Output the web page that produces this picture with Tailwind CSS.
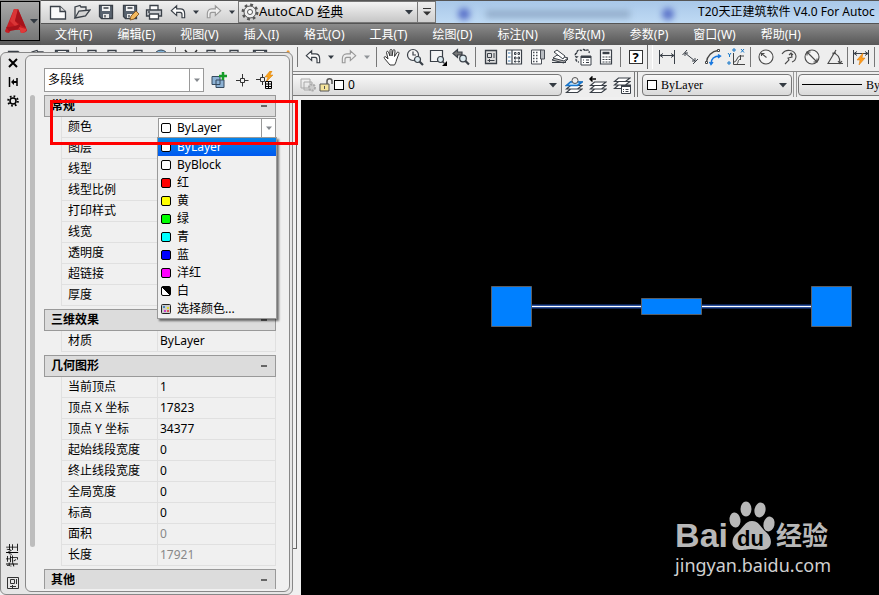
<!DOCTYPE html>
<html lang="zh-CN">
<head>
    <meta charset="UTF-8">
    <meta name="viewport" content="width=device-width, initial-scale=1.0">
    <title>T20天正建筑软件 V4.0 For AutoCAD</title>
    <script src="https://cdn.jsdelivr.net/npm/@tailwindcss/browser@4"></script>
</head>
<body class="relative flex h-screen flex-col overflow-hidden bg-[#f0f0f0] font-['Noto_Sans','Noto_Sans_CJK_SC',sans-serif] text-xs text-black">

    <!-- Shared icons -->
    <svg class="hidden">
        <symbol id="i-new" viewBox="0 0 18 18" stroke="#3a4048" stroke-width="1.3"><path d="M1.500 3.500H11l5.500 5v7.500h-15z" fill="#fafafa"/><path d="M11 3.500v5h5.500" fill="#ddd"/></symbol>
        <symbol id="i-open" viewBox="0 0 18 18" stroke="#3a4048" stroke-width="1.3"><path d="M2 15V4l5-1.500 1 1.500h5v3" fill="#e4e4e4"/><path d="M2 15 6 8l11-1-4.500 6z" fill="#d4d4d4"/></symbol>
        <symbol id="i-save" viewBox="0 0 18 18" stroke="#3a4048" stroke-width="1.3"><path d="M2.500 2.500h13v13h-11l-2-2z" fill="#59636f"/><path d="M5 3h8v5H5z" fill="#f3f3f3" stroke="none"/><path d="M6 11h6v4H6z" fill="#e8e8e8" stroke="none"/><path d="M6.500 5h5M8 12v2.500"/></symbol>
        <symbol id="i-print" viewBox="0 0 18 18" stroke="#3a4048" stroke-width="1.3"><path d="M5 7V2.500h8V7" fill="#fff"/><path d="M1.500 7h15v6h-15z" fill="#c9ccd0"/><path d="M4.500 11h9v5h-9z" fill="#fff"/><path d="M3 9h2"/></symbol>
        <symbol id="i-undo" viewBox="0 0 18 18" stroke="#3a4048" stroke-width="1.3"><path d="M1.500 7.500 7.500 2v3.500h4c3.500 0 5 2.500 5 5.500v4.500h-3V12c0-1.500-.5-2.500-2-2.500h-4V13z" fill="#fbfbfb"/></symbol>
        <symbol id="i-redo" viewBox="0 0 18 18" stroke="#999" stroke-width="1.3"><path d="M16.500 7.500 10.500 2v3.500h-4C3 5.500 1.500 8 1.500 11v4.500h3V12c0-1.500.5-2.500 2-2.500h4V13z" fill="#efefef"/></symbol>
        <symbol id="i-copy" viewBox="0 0 18 18" stroke="#3a4048" stroke-width="1.3"><path d="M2 2.500h8v10H2zM6 6h9v10H6z" fill="#f8f8f8"/></symbol>
        <symbol id="i-layers" viewBox="0 0 18 18" stroke="#3a4048" stroke-width="1.2"><path d="m1.500 16.500 4-3.500h11.500L12.500 16.500zM1.500 13l4-3.500H17L12.500 13zM1.500 9.500l4-3.500H17L12.500 9.500z" fill="#fff"/></symbol>
        <symbol id="i-down" viewBox="0 0 8 8"><path d="M0 2h8L4 6.500z" fill="#333a42"/></symbol>
    </svg>

    <header class="flex shrink-0 bg-linear-to-b from-[#8a8a8a] from-50% to-[#555]">
        <button aria-label="应用程序菜单" class="mt-px mr-px flex h-10 w-10 items-center justify-center gap-0.5 border border-black bg-linear-to-b from-[#a8a8a8] to-[#777] pl-0.5">
            <svg class="h-7 w-6 shrink-0" viewBox="0 0 24 28"><path d="M10 2h4l9 21c0 2-3 3-6 3l-1-3H7l-2 3c-2 0-4-1-4-2z" fill="#c61c22"/><path d="M10 2 6 14l9 9 1-3-5-6 3-12z" fill="#d93536"/><path d="m14 2-3 12 7 5 4 2z" fill="#a5131b"/><path d="M2 20c6 0 10-1 14-3v4c-4 2-8 3-11 3z" fill="#a5131b"/><path d="m15 20 7 2c1 2-2 4-5 4z" fill="#e03a3a"/></svg>
            <svg class="size-2 shrink-0"><use href="#i-down"/></svg>
        </button>
        <div class="min-w-0 flex-1">
            <div class="flex h-6 border-t border-b border-[#555] bg-[#bcd5f0]">
                <div class="flex items-center bg-linear-to-b from-[#f0f0f0] to-[#cfcfcf] pl-[5px]">
                    <button aria-label="新建" class="flex w-6 justify-center"><svg class="size-4.5"><use href="#i-new"/></svg></button>
                    <button aria-label="打开" class="flex w-6 justify-center"><svg class="size-4.5"><use href="#i-open"/></svg></button>
                    <button aria-label="保存" class="flex w-6 justify-center"><svg class="size-4.5"><use href="#i-save"/></svg></button>
                    <button aria-label="另存为" class="flex w-6 justify-center"><svg class="size-4.5" viewBox="0 0 18 18"><use href="#i-save"/><path d="m9 17 1-4 5-5 3 3-5 5z" fill="#f3b95f" stroke="#7a4a14" stroke-width=".8"/></svg></button>
                    <button aria-label="打印" class="flex w-6 justify-center"><svg class="size-4.5"><use href="#i-print"/></svg></button>
                    <button aria-label="放弃" class="flex w-6 justify-center"><svg class="size-4"><use href="#i-undo"/></svg></button>
                    <button aria-label="放弃列表" class="flex w-3 justify-center"><svg class="h-1.5 w-1.5"><use href="#i-down"/></svg></button>
                    <button aria-label="重做" class="flex w-6 justify-center"><svg class="size-4"><use href="#i-redo"/></svg></button>
                    <button aria-label="重做列表" class="flex w-3 justify-center"><svg class="h-1.5 w-1.5"><use href="#i-down"/></svg></button>
                    <label class="flex h-full w-[180px] items-center border border-[#777] bg-linear-to-b from-[#f4f4f4] to-[#c6c6c6] pr-1 pl-0.5">
                        <svg class="size-4.5 shrink-0" viewBox="0 0 18 18" fill="none" stroke="#555"><circle cx="9" cy="9" r="7.200" stroke-width="2.500" stroke-dasharray="2.800 2.850"/><circle cx="9" cy="9" r="6" fill="#eee"/><circle cx="9" cy="9" r="2.500" fill="#fff"/></svg>
                        <select aria-label="工作空间" class="min-w-0 flex-1 appearance-none text-[13px] outline-none"><option>AutoCAD 经典</option></select>
                        <svg class="size-2"><use href="#i-down"/></svg>
                    </label>
                    <button aria-label="自定义快速访问工具栏" class="flex h-full w-[18px] items-center justify-center border-y border-r border-[#777]">
                        <svg class="h-2.5 w-2" viewBox="0 0 8 10"><path d="M0 1.500h8" stroke="#333"/><path d="M0 4.500h8L4 8.500z" fill="#333"/></svg>
                    </button>
                </div>
                <div class="flex min-w-0 flex-1 items-center overflow-hidden bg-linear-to-b from-[#a9c8e9] to-[#bfdaf4] pl-[22px]">
                    <div aria-hidden="true" class="flex w-60 shrink-0 items-center gap-4 blur-[3px]">
                        <span class="mt-1 size-3 rounded-full bg-[#5870c8]"></span>
                        <span class="mt-1 h-2 w-36 bg-[#94aecb]"></span>
                        <span class="mt-1 ml-4 size-3 rounded-full bg-[#5870c8]"></span>
                    </div>
                    <h1 class="shrink-0 whitespace-nowrap">T20天正建筑软件 V4.0 For Autoc</h1>
                </div>
            </div>
            <nav class="flex h-[21px] items-center gap-[25px] overflow-hidden bg-linear-to-b from-[#8c8c8c] to-[#575757] pl-[14px] whitespace-nowrap text-white">
                <a href="#">文件(F)</a>
                <a href="#">编辑(E)</a>
                <a href="#">视图(V)</a>
                <a href="#">插入(I)</a>
                <a href="#">格式(O)</a>
                <a href="#">工具(T)</a>
                <a href="#">绘图(D)</a>
                <a href="#">标注(N)</a>
                <a href="#">修改(M)</a>
                <a href="#">参数(P)</a>
                <a href="#">窗口(W)</a>
                <a href="#">帮助(H)</a>
            </nav>
        </div>
    </header>

    <!-- Standard and dimension toolbars -->
    <div class="flex h-[27px] shrink-0 overflow-hidden border-b border-[#888] bg-[#eee] pb-0.5">
        <div class="flex shrink-0 items-center border-r border-[#666] pl-1">
            <button aria-label="新建" class="flex w-[23px] justify-center"><svg class="size-4.5"><use href="#i-new"/></svg></button>
            <button aria-label="打开" class="flex w-[23px] justify-center"><svg class="size-4.5"><use href="#i-open"/></svg></button>
            <button aria-label="保存" class="flex w-[23px] justify-center"><svg class="size-4.5"><use href="#i-save"/></svg></button>
            <i class="mx-[3px] h-5 w-px bg-[#777]"></i>
            <button aria-label="打印" class="flex w-[23px] justify-center"><svg class="size-4.5"><use href="#i-print"/></svg></button>
            <button aria-label="预览" class="flex w-[23px] justify-center"><svg class="size-4.5"><use href="#i-copy"/></svg></button>
            <button aria-label="发布" class="flex w-[23px] justify-center"><svg class="size-4.5"><use href="#i-print"/></svg></button>
            <button aria-label="三维DWF" class="flex w-[23px] justify-center"><svg class="size-4.5" viewBox="0 0 18 18"><circle cx="9" cy="9" r="7" fill="#7fb2d8" stroke="#345"/></svg></button>
            <i class="mx-[3px] h-5 w-px bg-[#777]"></i>
            <button aria-label="剪切" class="flex w-[23px] justify-center"><svg class="size-4.5" viewBox="0 0 18 18"><path d="m3 2 10 13M15 2 5 15" stroke="#333" stroke-width="1.500"/></svg></button>
            <button aria-label="复制" class="flex w-[23px] justify-center"><svg class="size-4.5"><use href="#i-copy"/></svg></button>
            <button aria-label="粘贴" class="flex w-[23px] justify-center"><svg class="size-4.5"><use href="#i-copy"/></svg></button>
            <button aria-label="特性匹配" class="flex w-[23px] justify-center"><svg class="size-4.5"><use href="#i-save"/></svg></button>
            <button aria-label="块编辑器" class="flex w-[23px] justify-center"><svg class="size-4.5" viewBox="0 0 18 18"><path d="M3 15 14 2l2 2L6 16z" fill="#f29a2e"/></svg></button>
            <i class="mx-[3px] h-5 w-px bg-[#777]"></i>
            <button aria-label="放弃" class="flex w-[23px] justify-center"><svg class="size-4"><use href="#i-undo"/></svg></button>
            <button aria-label="放弃列表" class="flex w-[13px] justify-center"><svg class="h-1.5 w-1.5"><use href="#i-down"/></svg></button>
            <button aria-label="重做" class="flex w-[23px] justify-center"><svg class="size-4"><use href="#i-redo"/></svg></button>
            <button aria-label="重做列表" class="flex w-[13px] justify-center opacity-50"><svg class="h-1.5 w-1.5"><use href="#i-down"/></svg></button>
            <i class="mx-[3px] h-5 w-px bg-[#777]"></i>
            <button aria-label="实时平移" class="flex w-[23px] justify-center"><svg class="size-4.5" viewBox="0 0 18 18"><path d="M7 17 1.500 10.500c-1-1.500.5-2.500 1.500-1.500L5 11 3.500 4.500c0-1.500 1.500-1.500 2-.5L7 8V2.500C7 1 9 1 9 2.500V8l1-5.500c.5-1.500 2-1 2 .5L11.500 8.500 14 4.500c1-1 2.500 0 2 1L13.500 12c-.5 2.500-1.500 4-2 5z" fill="#fff" stroke="#333"/></svg></button>
            <button aria-label="实时缩放" class="flex w-[23px] justify-center"><svg class="size-4.5" viewBox="0 0 18 18" fill="#f5f5f5" stroke="#3a4048" stroke-width="1.200"><circle cx="7" cy="7" r="5.500"/><path d="M7 3.500V7h3"/><path d="m13.500 13.500 3.500 3.500" stroke-width="2.200"/><circle cx="11.500" cy="11.500" r="3" fill="#dceaf0"/></svg></button>
            <button aria-label="窗口缩放" class="flex w-[23px] justify-center"><svg class="size-4.5" viewBox="0 0 18 18" fill="#f5f5f5" stroke="#3a4048" stroke-width="1.200"><path d="M1.500 2.500h12v11h-12z"/><circle cx="11.500" cy="11.500" r="3" fill="#dceaf0"/><path d="m13.500 13.500 2 2"/><path d="M18 13v5h-5z" fill="#000" stroke="none"/></svg></button>
            <button aria-label="缩放上一个" class="flex w-[23px] justify-center"><svg class="size-4.5" viewBox="0 0 18 18" stroke="#3a4048" stroke-width="1.200"><path d="m1 5.500 4.500-4V4H10v3H5.500v2.500z" fill="#777"/><circle cx="11" cy="10.500" r="3.300" fill="#dceaf0"/><path d="m13.500 13 3.500 3.500" stroke-width="2.200"/></svg></button>
            <i class="mx-[3px] h-5 w-px bg-[#777]"></i>
            <button aria-label="特性" class="flex w-[23px] justify-center"><svg class="size-4.5" viewBox="0 0 18 18" fill="none" stroke="#3a4048"><path d="M3.500 2.500h11v13h-11z" fill="#ddd" stroke-width="1.300"/><path d="M5.500 5.500h4v4h-4zM12 5v5M5.500 12.500h7M7.500 11v3"/></svg></button>
            <button aria-label="设计中心" class="flex w-[23px] justify-center"><svg class="size-4.5" viewBox="0 0 18 18" fill="none" stroke="#3a4048" stroke-width="1.200"><path d="M1.500 2h15v14h-15z" fill="#fff"/><path d="M7 2v14"/><path d="M3 5h2.500M3 9h2.500M3 13h2.500" stroke="#3a76ad"/><path d="M9.500 4.500h1.500v2H9.500zM13 4.500h1.500v2H13zM9.500 9h1.500v2H9.500zM13 9h1.500v2H13zM9.500 13h1.500v1H9.500zM13 13h1.500v1H13z" stroke-width="1"/></svg></button>
            <button aria-label="工具选项板" class="flex w-[23px] justify-center"><svg class="size-4.5" viewBox="0 0 18 18" fill="none" stroke="#4a4f57"><path d="M3.500 2h10v14h-10z" fill="#fff"/><path d="M12.500 2h4v9h-4z" fill="#b9bdc2"/><path d="M5 4.500h1.500M8 4.500h1.500M5 7.500h1.500M8 7.500h1.500M5 10.500h1.500M8 10.500h1.500M5 13.500h1.500M8 13.500h1.500" stroke-width="1.500"/></svg></button>
            <button aria-label="图纸集管理器" class="flex w-[23px] justify-center"><svg class="size-4.5" viewBox="0 0 18 18" fill="#fff" stroke="#3a4048"><path d="m1 12 4-3 12 2-4 4z" fill="#bbb"/><path d="m2 10 4-3 11 3-4 3z"/><path d="m3 4 3-2 8 6-2 3z"/><path d="M1 14.500h14"/></svg></button>
            <button aria-label="标记集管理器" class="flex w-[23px] justify-center"><svg class="size-4.5" viewBox="0 0 18 18" fill="none" stroke="#3a4048" stroke-width="1.400"><path d="M3 4.500c0-3 4-3 4-1.500 1-2 4-2 4 0 2-2 5-1 4 2M3 5c-3 1-2 4 0 4-2 2-1 5 2 5" stroke-dasharray="3 1"/><path d="M7 8h10v9H7z" fill="#fff" stroke-width="1"/><path d="M7 9h10" stroke-width="2"/><path d="M9 12h1M12 12h3M9 14.500h1M12 14.500h3" stroke-width="1"/></svg></button>
            <button aria-label="快速计算器" class="flex w-[23px] justify-center"><svg class="size-4.5" viewBox="0 0 18 18" fill="none" stroke="#3a4048" stroke-width="1.200"><path d="M3.500 2h11v14h-11z" fill="#fff"/><path d="M5.500 5h7" stroke-width="2.500"/><path d="M5.500 9h2M8.500 9h2M11.500 9h2M5.500 11.500h2M8.500 11.500h2M11.500 11.500h2M5.500 14h2M8.500 14h2M11.500 14h2" stroke-width="1.200"/></svg></button>
            <i class="mx-[3px] h-5 w-px bg-[#777]"></i>
            <button aria-label="帮助" class="flex w-[23px] justify-center"><span class="flex size-3.5 items-center justify-center border border-[#333] bg-white text-[13px] leading-none font-bold">?</span></button>
        </div>
        <div class="ml-1 flex flex-1 items-center border-l border-white pl-0.5">
            <button aria-label="线性" class="flex w-[23px] shrink-0 justify-center"><svg class="size-4.5" viewBox="0 0 18 18" fill="none" stroke="#3a4048"><path d="M1.500 2v14M16.500 2v14M2 7.500h14M5 5.500 2 7.500l3 2M13 5.500l3 2-3 2"/></svg></button>
            <button aria-label="对齐" class="flex w-[23px] shrink-0 justify-center"><svg class="size-4.5" viewBox="0 0 18 18" fill="none" stroke="#3a4048"><path d="M1.500 7 6 2M12 16l5-5M4 5l10 8M4 8V5h3M14 10v3h-3"/></svg></button>
            <button aria-label="弧长" class="flex w-[23px] shrink-0 justify-center"><svg class="size-4.5" viewBox="0 0 18 18" fill="none" stroke="#444"><path d="M2.500 14C3 8 8 3 14 2.500" stroke-width="1.300"/><path d="M1.500 13.500h2v2h-2zM13.500 1.500h2v2h-2z" fill="#fff"/><path d="M7 16c0-5 3-8 9-8M5.500 14 7 16.500 9 14M14 6.500 16.500 8 14 10" stroke="#1677e0" stroke-width="1.400"/></svg></button>
            <button aria-label="坐标" class="flex w-[23px] shrink-0 justify-center"><svg class="size-4.5" viewBox="0 0 18 18" fill="none" stroke="#444"><path d="M6.500 5v11.500H18M7 14c3 0 3-6 6-6h4M10 16c2-2 0-4 4-5M13.500 7v5"/><path d="m1 5 1.500 2L4 5M2.500 7v2M14 1l3 3.500M17 1l-3 3.500M6 1h2v2H6zM1 14h2v2H1z" stroke="#1677c8"/></svg></button>
            <i class="mx-[3px] h-5 w-px shrink-0 bg-[#777]"></i>
            <button aria-label="半径" class="flex w-[23px] shrink-0 justify-center"><svg class="size-4.5" viewBox="0 0 18 18" fill="#f4f4f4" stroke="#4a4a4a" stroke-width="1.100"><circle cx="9" cy="9" r="7"/><path d="m9.500 9.500-5-4M4.500 8V5.500h3"/></svg></button>
            <button aria-label="折弯" class="flex w-[23px] shrink-0 justify-center"><svg class="size-4.5" viewBox="0 0 18 18" fill="none" stroke="#4a4a4a" stroke-width="1.100"><path d="M2 6c4-6 13-4 14 2 0 3-1 5-4 6M5 16l4-4-1-2 4-1-1-4M9 7l2-2 2 2"/></svg></button>
            <button aria-label="直径" class="flex w-[23px] shrink-0 justify-center"><svg class="size-4.5" viewBox="0 0 18 18" fill="#f4f4f4" stroke="#4a4a4a" stroke-width="1.100"><circle cx="9" cy="9" r="7"/><path d="m4 4 10 10M4 7.500V4h3.500M14 10.500V14h-3.500"/></svg></button>
            <button aria-label="角度" class="flex w-[23px] shrink-0 justify-center"><svg class="size-4.5" viewBox="0 0 18 18" fill="none" stroke="#4a4a4a" stroke-width="1.100"><path d="M10 2 2 15.500h15M7 5c5 1 7 5 7 10M7 8V5h3M12 13l2 2.500 2-2.500"/></svg></button>
            <i class="mx-px h-5 w-px shrink-0 bg-[#777]"></i>
            <button aria-label="快速标注" class="flex w-[23px] shrink-0 justify-center"><svg class="size-4.5" viewBox="0 0 18 18" fill="none" stroke="#3a4048"><path d="M1.500 2v14M16.500 2v14M2 5.500h14M5 3.500 2 5.500l3 2M13 3.500l3 2-3 2"/><path d="M11 5 5 12h3l-1 5 6-7h-3z" fill="#ff9d1e" stroke="#d97400" stroke-width=".5"/></svg></button>
            <i class="mx-0.5 h-5 w-px shrink-0 bg-[#777]"></i>
        </div>
    </div>

    <!-- Layer and properties toolbars -->
    <div class="flex h-[25px] shrink-0 items-center overflow-hidden bg-[#eee]">
        <label class="flex h-[22px] w-[562px] shrink-0 items-center rounded-sm border border-[#777] bg-linear-to-b from-[#f8f8f8] to-[#dadada] pr-1 pl-[297px]">
            <svg class="h-4 w-5 shrink-0" viewBox="0 0 20 16" fill="none" stroke="#aaa"><path d="M3 2h9v9H3zM6 5h8v8H6z"/><circle cx="14" cy="10.500" r="3" fill="#ccc" stroke-width="2" stroke-dasharray="2 1"/></svg>
            <svg class="h-4 w-4 shrink-0" viewBox="0 0 16 16"><path d="M9 7V4c0-3 5-3 5 0v3" fill="none" stroke="#555" stroke-width="1.500"/><path d="M2 7h9v7H2z" fill="#f5e49b" stroke="#555"/><path d="M6.500 9v3" stroke="#555"/></svg>
            <span class="mr-1 size-[10px] shrink-0 border border-black bg-white"></span>
            <select aria-label="图层" class="min-w-0 flex-1 appearance-none outline-none"><option>0</option></select>
            <svg class="size-2"><use href="#i-down"/></svg>
        </label>
        <button aria-label="将对象的图层置为当前" class="flex w-6 shrink-0 justify-center"><svg class="size-4.5" viewBox="0 0 18 18" fill="none"><use href="#i-layers"/><path d="m1.500 9.500 4-3.500H17L12.500 9.500z" fill="#bfe0fa" stroke="#1677d0" stroke-width="1.600"/><circle cx="10" cy="4.500" r="3" fill="#eee" stroke="#555"/></svg></button>
        <button aria-label="上一个图层" class="flex w-6 shrink-0 justify-center"><svg class="size-4.5" viewBox="0 0 18 18" fill="none"><use href="#i-layers"/><path d="M1 3h6M3.500.5 1 3l2.500 2.500" stroke="#000" stroke-width="1.500"/></svg></button>
        <button aria-label="图层状态管理器" class="flex w-6 shrink-0 justify-center"><svg class="size-4.5" viewBox="0 0 18 18" fill="none" stroke="#3a4048"><use href="#i-layers" y="-4"/><path d="M8.500 9.500h9v8h-9z" fill="#fff"/><path d="M8 10h10" stroke-width="2"/><path d="M10 13.500h1M12.500 13.500h3M10 15.500h1M12.500 15.500h3"/></svg></button>
        <i class="mr-1 h-full w-1 shrink-0 border-x border-[#777]"></i>
        <label class="flex h-[22px] w-[150px] shrink-0 items-center gap-1 rounded-sm border border-[#777] bg-linear-to-b from-[#f8f8f8] to-[#dadada] px-1 font-['Liberation_Serif',serif]">
            <span class="size-[10px] shrink-0 border border-black bg-white"></span>
            <select aria-label="颜色控制" class="min-w-0 flex-1 appearance-none outline-none"><option>ByLayer</option></select>
            <svg class="size-2"><use href="#i-down"/></svg>
        </label>
        <i class="mx-px h-full w-1 shrink-0 border-x border-[#999]"></i>
        <label class="flex h-[22px] w-[180px] shrink-0 items-center gap-1 rounded-sm border border-[#777] bg-linear-to-b from-[#f8f8f8] to-[#dadada] px-[3px] font-['Liberation_Serif',serif]">
            <span class="h-px w-[60px] shrink-0 bg-black"></span>
            <select aria-label="线型控制" class="min-w-0 flex-1 appearance-none outline-none"><option>ByLayer</option></select>
        </label>
    </div>

    <!-- Drawing area -->
    <main class="flex min-h-0 flex-1 pt-[3px]">
        <div class="w-[297px] shrink-0"><div class="h-[449px] border-r border-b border-[#666]"></div></div>
        <div class="relative ml-1 min-w-0 flex-1 overflow-hidden bg-black">
            <svg class="absolute top-0 left-0 h-full w-full" role="img" aria-label="选中的多段线">
                <path d="M211 206.500h320" stroke="#0d2350" stroke-width="5"/>
                <path d="M211 206.500h320" stroke="#2c4f9a" stroke-width="3"/>
                <path d="M211 206.500h320" stroke="#fff"/>
                <g fill="#0080ff" stroke="#5a5f66">
                    <path d="M190.500 186.500h40v40h-40zM340.500 198.500h60v16h-60zM510.500 186.500h40v40h-40z"/>
                </g>
            </svg>
            <div class="absolute right-12 bottom-4 text-[#d0d0d0]">
                <div class="flex h-[52px] items-end text-[#b8b8b8]">
                    <span class="font-['Liberation_Sans',sans-serif] text-[34px] leading-8 font-bold">Bai</span>
                    <svg class="h-[52px] w-12 shrink-0" viewBox="0 0 48 52" fill="#b8b8b8">
                        <ellipse cx="7" cy="21" rx="5.500" ry="7.500" transform="rotate(-8 7 21)"/><ellipse cx="18" cy="10" rx="5.500" ry="7.500"/><ellipse cx="32" cy="11" rx="5.500" ry="7.500" transform="rotate(12 32 11)"/><ellipse cx="41" cy="25" rx="5.500" ry="7.500" transform="rotate(12 41 25)"/>
                        <path d="M24 22c7 0 9 7 14 11 8 7 6 18-4 18-4 0-6-1-10-1s-6 1-11 1C3 51 2 40 9 34c6-5 8-12 15-12z"/>
                        <text x="9" y="47" fill="#000" font-family="Liberation Sans, sans-serif" font-size="22" font-weight="700">du</text>
                    </svg>
                    <span class="text-[26px] leading-8 font-bold">经验</span>
                </div>
                <div class="text-lg leading-7">jingyan.baidu.com</div>
            </div>
        </div>
    </main>

    <!-- Floating properties palette -->
    <aside class="absolute top-[52px] bottom-0 left-0 flex w-[293px] rounded-md border border-[#888] bg-[#e6e6e6] p-0.5">
        <div class="flex w-[22px] flex-col items-center gap-[3px] pr-0.5 pb-0.5">
            <button aria-label="关闭" class="flex h-4 items-center"><svg class="size-2.5" viewBox="0 0 10 10"><path d="m1 1 8 8M9 1 1 9" stroke="#000" stroke-width="2"/></svg></button>
            <button aria-label="自动隐藏" class="flex h-4 items-center"><svg class="size-2.5" viewBox="0 0 10 10"><path d="M1.500 0v10M9 1v8" stroke="#000" stroke-width="1.500"/><path d="m3 5 3-3v6zM5 4h4v2H5z"/></svg></button>
            <button aria-label="选项" class="flex h-4 items-center"><svg class="size-3" viewBox="0 0 12 12" fill="none" stroke="#000"><circle cx="6" cy="6" r="4.800" stroke-width="2" stroke-dasharray="1.700 2.070"/><circle cx="6" cy="6" r="3" stroke-width="1.500"/></svg></button>
            <h2 class="mt-auto mb-1.5 rotate-180 leading-4 [text-orientation:sideways] [writing-mode:vertical-rl]">特性</h2>
            <svg class="size-3.5 shrink-0" viewBox="0 0 14 14" fill="none" stroke="#333"><path d="M1.500 1.500h11v11h-11zM4.500 3.500h4v4h-4zM10.500 3v5M4 10.500h6M6.500 9v3"/></svg>
        </div>
        <div class="flex min-w-0 flex-1 flex-col overflow-hidden rounded-md border border-[#888] bg-[#f0f0f0] pr-[13px] pl-1">
            <div class="flex h-[39px] shrink-0 items-center pt-2 pl-[14px]">
                <label class="flex h-6 w-40 items-center border border-[#999] bg-white">
                    <select aria-label="对象类型" class="min-w-0 flex-1 appearance-none pl-[3px] outline-none"><option>多段线</option></select>
                    <span class="flex h-full w-3.5 items-center justify-center border-l border-[#999]"><svg class="h-1.5 w-1.5 opacity-60"><use href="#i-down"/></svg></span>
                </label>
                <div class="flex flex-1 justify-around pl-1">
                    <button aria-label="切换PICKADD"><svg class="size-4.5" viewBox="0 0 18 18" stroke="#34495e"><path d="M2 5.500h8v8H2zM6 9h8v7.500H6z" fill="#8db2d4"/><path d="M13 1v8M9 5h8" stroke="#159b28" stroke-width="2.500"/></svg></button>
                    <button aria-label="选择对象"><svg class="size-4.5" viewBox="0 0 18 18" fill="none" stroke="#333"><path d="M9.500 3v4.500M9.500 11.500v4M3 9.500h4.500M11.500 9.500h4M7.500 7.500h4v4h-4z"/></svg></button>
                    <button aria-label="快速选择"><svg class="size-4.5" viewBox="0 0 18 18" fill="none" stroke="#333"><path d="M6.500 3v4M6.500 11v3M0 8.500h4.500M4.500 6.500h4v4h-4z"/><path d="m14 0-5 6h3l-2 5 7-7h-3l2-4z" fill="#f9a11b" stroke="#d57a00" stroke-width=".5"/><path d="M9.500 10.500h6v7h-6zM12.500 10v7M9 13h7M9 15.500h7" stroke="#000"/></svg></button>
                </div>
            </div>
            <div class="flex min-h-0 flex-1 gap-[9px]">
                <div class="mb-11 w-[5px] shrink-0 rounded-full bg-[#bdbdbd]"></div>
                <div class="mb-0.5 flex min-w-0 flex-1 flex-col gap-[3px] overflow-hidden">
                    <section>
                        <h3 class="flex h-[22px] items-center justify-between border border-[#999] bg-[#dcdcdc] pr-2 pl-1.5 font-bold">常规<span class="h-0.5 w-1.5 bg-[#666]"></span></h3>
                        <table class="ml-[17px] w-[215px] table-fixed border-separate border-spacing-0">
                            <tbody>
                                <tr class="h-[21px]">
                                    <th class="w-24 border-b border-l border-[#e0e0e0] p-0 pl-1.5 text-left leading-5 font-normal"><label for="color">颜色</label></th>
                                    <td class="p-0 pl-px">
                                        <div class="flex h-5 items-center border border-[#999] bg-white">
                                            <span class="mx-0.5 size-[10px] shrink-0 rounded-xs border border-black bg-white"></span>
                                            <select id="color" class="min-w-0 flex-1 appearance-none pl-1 leading-4 outline-none"><option>ByLayer</option></select>
                                            <span class="flex h-full w-3.5 items-center justify-center border-l border-[#999]"><svg class="h-1.5 w-1.5 opacity-60"><use href="#i-down"/></svg></span>
                                        </div>
                                    </td>
                                </tr>
                                <tr class="h-[21px]"><th class="border-b border-l border-[#e0e0e0] p-0 pl-1.5 text-left leading-5 font-normal">图层</th><td></td></tr>
                                <tr class="h-[21px]"><th class="border-b border-l border-[#e0e0e0] p-0 pl-1.5 text-left leading-5 font-normal">线型</th><td></td></tr>
                                <tr class="h-[21px]"><th class="border-b border-l border-[#e0e0e0] p-0 pl-1.5 text-left leading-5 font-normal">线型比例</th><td></td></tr>
                                <tr class="h-[21px]"><th class="border-b border-l border-[#e0e0e0] p-0 pl-1.5 text-left leading-5 font-normal">打印样式</th><td></td></tr>
                                <tr class="h-[21px]"><th class="border-b border-l border-[#e0e0e0] p-0 pl-1.5 text-left leading-5 font-normal">线宽</th><td></td></tr>
                                <tr class="h-[21px]"><th class="border-b border-l border-[#e0e0e0] p-0 pl-1.5 text-left leading-5 font-normal">透明度</th><td></td></tr>
                                <tr class="h-[21px]"><th class="border-b border-l border-[#e0e0e0] p-0 pl-1.5 text-left leading-5 font-normal">超链接</th><td></td></tr>
                                <tr class="h-[21px]"><th class="border-b border-l border-[#e0e0e0] p-0 pl-1.5 text-left leading-5 font-normal">厚度</th><td></td></tr>
                            </tbody>
                        </table>
                    </section>
                    <section>
                        <h3 class="flex h-[22px] items-center justify-between border border-[#999] bg-[#dcdcdc] pr-2 pl-1.5 font-bold">三维效果<span class="h-0.5 w-1.5 bg-[#666]"></span></h3>
                        <table class="ml-[17px] w-[215px] table-fixed border-separate border-spacing-0">
                            <tbody>
                                <tr class="h-[21px]"><th class="w-24 border-b border-l border-[#e0e0e0] p-0 pl-1.5 text-left leading-5 font-normal">材质</th><td class="border-x border-b border-[#e0e0e0] p-0 pl-0.5 leading-5">ByLayer</td></tr>
                            </tbody>
                        </table>
                    </section>
                    <section>
                        <h3 class="flex h-[22px] items-center justify-between border border-[#999] bg-[#dcdcdc] pr-2 pl-1.5 font-bold">几何图形<span class="h-0.5 w-1.5 bg-[#666]"></span></h3>
                        <table class="ml-[17px] w-[215px] table-fixed border-separate border-spacing-0">
                            <tbody>
                                <tr class="h-[21px]"><th class="w-24 border-b border-l border-[#e0e0e0] p-0 pl-1.5 text-left leading-5 font-normal">当前顶点</th><td class="border-x border-b border-[#e0e0e0] p-0 pl-0.5 leading-5">1</td></tr>
                                <tr class="h-[21px]"><th class="border-b border-l border-[#e0e0e0] p-0 pl-1.5 text-left leading-5 font-normal">顶点 X 坐标</th><td class="border-x border-b border-[#e0e0e0] p-0 pl-0.5 leading-5">17823</td></tr>
                                <tr class="h-[21px]"><th class="border-b border-l border-[#e0e0e0] p-0 pl-1.5 text-left leading-5 font-normal">顶点 Y 坐标</th><td class="border-x border-b border-[#e0e0e0] p-0 pl-0.5 leading-5">34377</td></tr>
                                <tr class="h-[21px]"><th class="border-b border-l border-[#e0e0e0] p-0 pl-1.5 text-left leading-5 font-normal">起始线段宽度</th><td class="border-x border-b border-[#e0e0e0] p-0 pl-0.5 leading-5">0</td></tr>
                                <tr class="h-[21px]"><th class="border-b border-l border-[#e0e0e0] p-0 pl-1.5 text-left leading-5 font-normal">终止线段宽度</th><td class="border-x border-b border-[#e0e0e0] p-0 pl-0.5 leading-5">0</td></tr>
                                <tr class="h-[21px]"><th class="border-b border-l border-[#e0e0e0] p-0 pl-1.5 text-left leading-5 font-normal">全局宽度</th><td class="border-x border-b border-[#e0e0e0] p-0 pl-0.5 leading-5">0</td></tr>
                                <tr class="h-[21px]"><th class="border-b border-l border-[#e0e0e0] p-0 pl-1.5 text-left leading-5 font-normal">标高</th><td class="border-x border-b border-[#e0e0e0] p-0 pl-0.5 leading-5">0</td></tr>
                                <tr class="h-[21px]"><th class="border-b border-l border-[#e0e0e0] p-0 pl-1.5 text-left leading-5 font-normal">面积</th><td class="border-x border-b border-[#e0e0e0] p-0 pl-0.5 leading-5 text-[#888]">0</td></tr>
                                <tr class="h-[21px]"><th class="border-b border-l border-[#e0e0e0] p-0 pl-1.5 text-left leading-5 font-normal">长度</th><td class="border-x border-b border-[#e0e0e0] p-0 pl-0.5 leading-5 text-[#888]">17921</td></tr>
                            </tbody>
                        </table>
                    </section>
                    <section>
                        <h3 class="flex h-[22px] items-center justify-between border border-[#999] bg-[#dcdcdc] pr-2 pl-1.5 font-bold">其他<span class="h-0.5 w-1.5 bg-[#666]"></span></h3>
                    </section>
                </div>
            </div>
        </div>

        <!-- Open colour list -->
        <ul role="listbox" aria-label="颜色" class="absolute top-[84px] left-[156px] w-[120px] border border-[#999] bg-[#f0f0f0] shadow-[2px_2px_2px_#0008]">
            <li role="option" aria-selected="true" class="flex h-[18px] items-center gap-1.5 bg-linear-to-b from-[#0a84e8] to-[#0058f0] pl-[3px] text-white"><span class="size-[10px] rounded-xs border border-black bg-white"></span>ByLayer</li>
            <li role="option" class="flex h-[18px] items-center gap-1.5 pl-[3px]"><span class="size-[10px] rounded-xs border border-black bg-white"></span>ByBlock</li>
            <li role="option" class="flex h-[18px] items-center gap-1.5 pl-[3px]"><span class="size-[10px] rounded-xs border border-black bg-[#f00]"></span>红</li>
            <li role="option" class="flex h-[18px] items-center gap-1.5 pl-[3px]"><span class="size-[10px] rounded-xs border border-black bg-[#ff0]"></span>黄</li>
            <li role="option" class="flex h-[18px] items-center gap-1.5 pl-[3px]"><span class="size-[10px] rounded-xs border border-black bg-[#0f0]"></span>绿</li>
            <li role="option" class="flex h-[18px] items-center gap-1.5 pl-[3px]"><span class="size-[10px] rounded-xs border border-black bg-[#0ff]"></span>青</li>
            <li role="option" class="flex h-[18px] items-center gap-1.5 pl-[3px]"><span class="size-[10px] rounded-xs border border-black bg-[#00f]"></span>蓝</li>
            <li role="option" class="flex h-[18px] items-center gap-1.5 pl-[3px]"><span class="size-[10px] rounded-xs border border-black bg-[#f0f]"></span>洋红</li>
            <li role="option" class="flex h-[18px] items-center gap-1.5 pl-[3px]"><span class="size-[10px] rounded-xs border border-black bg-linear-to-tr from-white from-50% to-black to-50%"></span>白</li>
            <li role="option" class="flex h-[18px] items-center gap-1.5 pl-[3px]"><svg class="size-[10px]" viewBox="0 0 10 10"><rect x=".5" y=".5" width="9" height="9" rx="1" fill="#ccc" stroke="#222"/><path d="M2 2h2v2H2z" fill="#48b"/><path d="M6 3h2v2H6z" fill="#dd3"/><path d="M3 6h2v2H3z" fill="#c4c"/><path d="M6 6h2v2H6z" fill="#d55"/></svg>选择颜色...</li>
        </ul>
    </aside>

    <!-- Callout frame -->
    <div class="pointer-events-none absolute top-[100px] left-[50px] h-[45px] w-[248px] border-3 border-[#f00]"></div>
</body>
</html>
